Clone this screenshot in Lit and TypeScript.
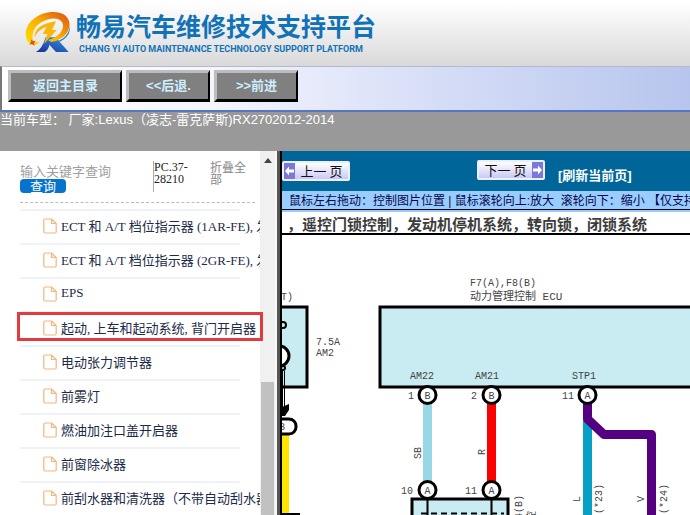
import { LitElement, html, css, svg } from "lit";
import { customElement, state } from "lit/decorators.js";
import { classMap } from "lit/directives/class-map.js";

const TOPICS = [
  "ECT 和 A/T 档位指示器 (1AR-FE), 发动机",
  "ECT 和 A/T 档位指示器 (2GR-FE), 发动机",
  "EPS",
  "起动, 上车和起动系统, 背门开启器",
  "电动张力调节器",
  "前雾灯",
  "燃油加注口盖开启器",
  "前窗除冰器",
  "前刮水器和清洗器（不带自动刮水器）",
];

@customElement("app-header")
class AppHeader extends LitElement {
  static styles = css`
    :host {
      display: block;
      font-family: "Liberation Sans", "Noto Sans CJK SC", sans-serif;
    }
    .brand {
      display: flex;
      gap: 4px;
      height: 66px;
      box-sizing: border-box;
      padding: 10px 0 0 24px;
      background: linear-gradient(#fff 4%, #d9d9d9);
    }
    .logo {
      flex: none;
      width: 48px;
      height: 44px;
    }
    .names {
      color: #1272b6;
      white-space: nowrap;
    }
    h1 {
      margin: 0;
      font-size: 25px;
      line-height: 34px;
      font-weight: 700;
    }
    .latin {
      margin: 0;
      padding-left: 3px;
      font-family: Roboto, "Liberation Sans", sans-serif;
      font-size: 9px;
      line-height: 10px;
      font-weight: 700;
    }
    .toolbar {
      display: flex;
      gap: 4px;
      height: 46px;
      box-sizing: border-box;
      padding: 3px 6px 0;
      border-left: 2px solid #777;
      border-top: 1px solid #b4bacb;
      border-bottom: 2px solid #5577c2;
      background: linear-gradient(90deg, #fff, #f4f5fe 30%, #d4dcf6 65%, #b7c5ed);
    }
    .toolbar button {
      box-sizing: border-box;
      height: 32px;
      min-width: 84px;
      padding: 0 10px;
      border: solid;
      border-width: 3px 2px 3px 3px;
      border-color: #bdbdbd #000 #000 #bdbdbd;
      background: #808080;
      color: #cdeeff;
      font: 700 13px/24px "Liberation Sans", "Noto Sans CJK SC", sans-serif;
      white-space: nowrap;
    }
    .toolbar .wide {
      min-width: 114px;
    }
    .model {
      height: 39px;
      background: #999;
      color: #fff;
      font-size: 13px;
      line-height: 16px;
      white-space: nowrap;
    }
  `;

  render() {
    return html`
      <div class="brand">
        <svg class="logo" viewBox="72 30 144 132" aria-hidden="true">
          <defs>
            <linearGradient id="swirl" x1="0" y1="1" x2="1" y2="0">
              <stop offset="0" stop-color="#ffe100" />
              <stop offset=".5" stop-color="#f9b000" />
              <stop offset="1" stop-color="#dd4a12" />
            </linearGradient>
            <linearGradient id="leg" x1="0" y1="1" x2="1" y2="0">
              <stop offset="0" stop-color="#1b2a9c" />
              <stop offset="1" stop-color="#2f9be0" />
            </linearGradient>
          </defs>
          <path d="M108 156Q126 148 137 112L165 112L153 124L174 120L206 156H168L148 134Q146 148 134 156Z" fill="url(#leg)" />
          <path d="M162 126Q204 118 210 78Q212 104 190 119Q178 127 168 128Z" fill="#2a7fc8" />
          <path d="M80 118C66 78 108 36 160 36C194 36 212 56 208 80C204 104 182 120 154 126L144 120C170 113 189 96 189 77C189 60 171 51 148 57C112 66 94 90 98 118Q104 132 118 124L112 132Q90 142 80 118Z" fill="url(#swirl)" />
          <path d="M104 112C102 88 124 70 168 64L156 90H170L132 132L142 102H128L140 80Q112 90 104 112Z" fill="#f8b60a" />
          <path d="M94 118L99 124L107 122L102 129L104 137L96 132L88 134L93 127Z" fill="#e5481b" />
        </svg>
        <div class="names">
          <h1>畅易汽车维修技术支持平台</h1>
          <p class="latin">CHANG YI AUTO MAINTENANCE TECHNOLOGY SUPPORT PLATFORM</p>
        </div>
      </div>
      <nav class="toolbar">
        <button class="wide">返回主目录</button>
        <button>&lt;&lt;后退.</button>
        <button>&gt;&gt;前进</button>
      </nav>
      <div class="model">当前车型： 厂家:Lexus（凌志-雷克萨斯)RX2702012-2014</div>
    `;
  }
}

@customElement("topic-sidebar")
class TopicSidebar extends LitElement {
  @state() selected = 3;

  static styles = css`
    :host {
      display: flex;
      box-sizing: border-box;
      border-right: 2px solid #000;
      background: #fff;
      font-family: "Liberation Serif", "Noto Sans CJK SC", serif;
    }
    .content {
      flex: 1;
      min-width: 0;
      padding-left: 20px;
    }
    .tools {
      display: flex;
      height: 52px;
      margin-right: 5px;
      padding-top: 10px;
      box-sizing: border-box;
      border-bottom: 1px dashed #bbb;
      font-size: 12px;
      line-height: 12px;
    }
    form {
      width: 133px;
      display: flex;
      flex-direction: column;
      align-items: flex-start;
    }
    input {
      width: 125px;
      height: 18px;
      box-sizing: border-box;
      margin: 0;
      padding: 2px 0 0;
      border: 0;
      outline: 0;
      background: none;
      font: 13px/16px "Liberation Sans", "Noto Sans CJK SC", sans-serif;
    }
    input::placeholder {
      color: #a0a0a0;
      opacity: 1;
    }
    .go {
      width: 46px;
      height: 14px;
      padding: 0;
      border: 0;
      border-radius: 4px;
      background: #0773cd;
      color: #fff;
      font: 13px/14px "Noto Sans CJK SC", sans-serif;
    }
    .code {
      width: 57px;
      height: 31px;
      box-sizing: border-box;
      border-left: 1px solid #aaa;
      color: #222;
    }
    .code span {
      display: block;
      width: 40px;
    }
    .fold {
      width: 38px;
      padding: 0;
      border: 0;
      background: none;
      color: #888;
      font: 12px/12px "Noto Sans CJK SC", sans-serif;
      text-align: left;
      align-self: flex-start;
    }
    ul {
      margin: 6px 0 0;
      padding: 0;
      list-style: none;
    }
    li {
      position: relative;
      height: 34px;
      background: linear-gradient(#f0f2f5, #f0f2f5) 0 0 / calc(100% - 20px) 2px no-repeat;
    }
    a {
      display: flex;
      align-items: center;
      gap: 4px;
      height: 34px;
      padding-left: 23px;
      color: #1c2b48;
      font-size: 13px;
      text-decoration: none;
      white-space: nowrap;
      overflow: hidden;
    }
    a svg {
      flex: none;
    }
    a span {
      padding-bottom: 2px;
    }
    .selected::after {
      content: "";
      position: absolute;
      inset: 1px -3px 4px;
      border: 3px solid #e23b3f;
      z-index: 1;
      pointer-events: none;
    }
    .scroll {
      flex: none;
      width: 15px;
      display: grid;
      grid-template-rows: 17px 214fr 133fr;
      justify-items: center;
      border-right: 2px solid #f8f8f8;
      background: #f0f0f0;
    }
    .arrow {
      margin-top: 7px;
      width: 0;
      height: 0;
      border: 4px solid transparent;
      border-top: 0;
      border-bottom: 5px solid #444;
    }
    .thumb {
      grid-row: 3;
      width: 13px;
      background: #c1c1c1;
    }
    .splitter {
      flex: none;
      width: 3px;
      background: #555;
    }
  `;

  render() {
    return html`
      <div class="content">
        <div class="tools">
          <form @submit=${(e: Event) => e.preventDefault()}>
            <input type="text" aria-label="输入关键字查询" placeholder="输入关键字查询" />
            <button class="go">查询</button>
          </form>
          <div class="code"><span>PC.37-28210</span></div>
          <button class="fold">折叠全部</button>
        </div>
        <ul>
          ${TOPICS.map(
            (t, i) => html`<li class=${classMap({ selected: i === this.selected })}>
              <a href="#" @click=${(e: Event) => { e.preventDefault(); this.selected = i; }}>
                <svg width="14" height="16" viewBox="0 0 14 16" fill="none" stroke="#f5b57f" stroke-width="1.2" stroke-linejoin="round" aria-hidden="true">
                  <path d="M8.5 1H2Q.8 1 .8 2.2V13.8Q.8 15 2 15H12Q13.2 15 13.2 13.8V5.5ZM8.5 1V5.5H13.2" />
                </svg>
                <span>${t}</span>
              </a>
            </li>`
          )}
        </ul>
      </div>
      <div class="scroll"><i class="arrow"></i><i class="thumb"></i></div>
      <div class="splitter"></div>
    `;
  }
}

@customElement("wiring-view")
class WiringView extends LitElement {
  static styles = css`
    :host {
      display: flex;
      flex-direction: column;
      background: #fff;
      overflow: hidden;
      font-family: "Liberation Sans", "Noto Sans CJK SC", sans-serif;
      white-space: nowrap;
    }
    .pager {
      flex: none;
      display: flex;
      align-items: flex-start;
      height: 40px;
      box-sizing: border-box;
      padding-top: 9px;
      background: #006699;
    }
    .page {
      display: flex;
      flex: none;
      box-sizing: border-box;
      width: 68px;
      height: 20px;
      padding: 0;
      border: 2px solid #eef;
      border-radius: 2px;
      background: linear-gradient(#fff, #c9c9f6);
      color: #111;
      font: 13px/15px "Noto Sans CJK SC", sans-serif;
    }
    .page span {
      flex: 1;
      white-space: pre;
    }
    .page svg {
      flex: none;
      width: 11px;
      height: 16px;
      background: #7a79d8;
    }
    .prev {
      margin: 1px 127px 0 0;
    }
    .refresh {
      margin: 7px 0 0 13px;
      color: #fff;
      font-size: 13px;
      line-height: 18px;
      font-weight: 700;
      text-decoration: none;
    }
    .hint {
      flex: none;
      height: 18px;
      padding-left: 7px;
      border-bottom: 1px solid #000;
      background: #99ccff;
      color: #06064a;
      font-size: 12px;
      line-height: 20px;
      white-space: pre;
    }
    h2 {
      flex: none;
      margin: 0;
      height: 25px;
      box-sizing: border-box;
      padding-left: 5px;
      border-top: 2px solid #99ccff;
      border-bottom: 2px solid #000;
      color: #3c3c3c;
      font: 700 15px/24px "Noto Sans CJK SC", sans-serif;
    }
    .diagram {
      flex: 1;
      min-height: 0;
      width: 100%;
      font: 10px "Liberation Mono", "Noto Sans CJK SC", monospace;
      fill: #444;
    }
    .cjk {
      font-size: 11px;
    }
    .box {
      fill: #c9ebf2;
      stroke: #000;
      stroke-width: 3;
    }
    .pin {
      fill: #fff;
      stroke: #000;
      stroke-width: 3;
    }
    .line {
      fill: none;
      stroke: #000;
      stroke-width: 2;
    }
    .wire {
      fill: none;
      stroke-width: 9;
      stroke-linejoin: round;
    }
    .sb { stroke: #98d8e6; }
    .red { stroke: #fe0000; }
    .blue { stroke: #05a0c6; }
    .violet { stroke: #550080; }
    .yellow { stroke: #ffe400; }
  `;

  pin(x: number, y: number, letter: string, num: string, nx: number) {
    return svg`
      <circle class="pin" cx=${x} cy=${y} r="8.5" />
      <text x=${x} y=${y + 4} text-anchor="middle">${letter}</text>
      <text x=${nx} y=${y + 4}>${num}</text>`;
  }

  tag(x: number, y: number, text: string) {
    return svg`<text transform="translate(${x} ${y}) rotate(-90)">${text}</text>`;
  }

  render() {
    return html`
      <div class="pager">
        <button class="page prev">
          <svg viewBox="0 0 11 16" fill="#fff" aria-hidden="true"><path d="M1 8L5 3.5V6.5H10V9.5H5V12.5Z" /></svg>
          <span>上一 页</span>
        </button>
        <button class="page">
          <span>下一 页</span>
          <svg viewBox="0 0 11 16" fill="#fff" aria-hidden="true"><path d="M10 8L6 3.5V6.5H1V9.5H6V12.5Z" /></svg>
        </button>
        <a class="refresh" href="#">[刷新当前页]</a>
      </div>
      <div class="hint">鼠标左右拖动：控制图片位置 | 鼠标滚轮向上:放大&nbsp; 滚轮向下：缩小 【仅支持IE浏览器】</div>
      <h2>，遥控门锁控制，发动机停机系统，转向锁，闭锁系统</h2>
      <svg class="diagram">
        <g transform="translate(-282 -236)">
          <text x="269" y="301">(AT)</text>
          <rect class="box" x="260" y="308" width="47" height="80" />
          <circle class="pin" cx="279" cy="357" r="10" />
          <circle class="line" cx="283" cy="326" r="3" />
          <circle class="line" cx="283" cy="369" r="2" />
          <path d="M282.500 372V410M284.500 372V410" stroke="#000" />
          <path d="M282 408L289 405V411L285 417H282Z" fill="#000" />
          <path class="wire yellow" d="M284.500 436V515" />
          <rect class="pin" x="270" y="420" width="26" height="15" rx="7" />
          <text x="279" y="431">B</text>
          <path class="line" d="M282 515H300" />
          <text x="316" y="346">7.5A</text>
          <text x="316" y="357">AM2</text>

          <rect class="box" x="380" y="308" width="2000" height="80" />
          <text x="470" y="287">F7(A),F8(B)</text>
          <text class="cjk" x="470" y="301">动力管理控制 ECU</text>
          <text x="410" y="380">AM22</text>
          <text x="475" y="380">AM21</text>
          <text x="572" y="380">STP1</text>

          <path class="wire sb" d="M427.500 396V490" />
          <path class="wire red" d="M491.500 396V490" />
          <path class="wire blue" d="M587.500 410V800" />
          <path class="wire violet" d="M587.500 396V420L604 435.500H651.500V800" />
          <path class="box" d="M412 800V500H508V800" />
          <path class="line" d="M427.500 500V800M491.500 500V800" />
          <path class="line" d="M421 514.500H504" stroke-dasharray="6 4" />
          ${this.pin(427.5, 396, "B", "1", 408)}
          ${this.pin(491.5, 396, "B", "2", 471)}
          ${this.pin(587.5, 396, "A", "11", 562)}
          ${this.pin(427.5, 491, "A", "10", 401)}
          ${this.pin(491.5, 491, "A", "11", 465)}
          ${this.tag(421, 460, "SB")}
          ${this.tag(485, 456, "R")}
          ${this.tag(580, 503, "L")}
          ${this.tag(602, 515, "(*23)")}
          ${this.tag(644, 503, "V")}
          ${this.tag(667, 515, "(*24)")}
          ${this.tag(522, 520, "4(B)")}
          ${this.tag(535, 522, "控")}
        </g>
      </svg>
    `;
  }
}

@customElement("app-root")
class AppRoot extends LitElement {
  static styles = css`
    :host {
      display: flex;
      flex-direction: column;
      height: 100vh;
      overflow: hidden;
    }
    app-header {
      flex: none;
    }
    main {
      flex: 1;
      min-height: 0;
      display: flex;
    }
    topic-sidebar {
      flex: none;
      width: 282px;
      overflow: hidden;
    }
    wiring-view {
      flex: 1;
      min-width: 0;
    }
  `;

  render() {
    return html`
      <app-header></app-header>
      <main>
        <topic-sidebar></topic-sidebar>
        <wiring-view></wiring-view>
      </main>
    `;
  }
}
